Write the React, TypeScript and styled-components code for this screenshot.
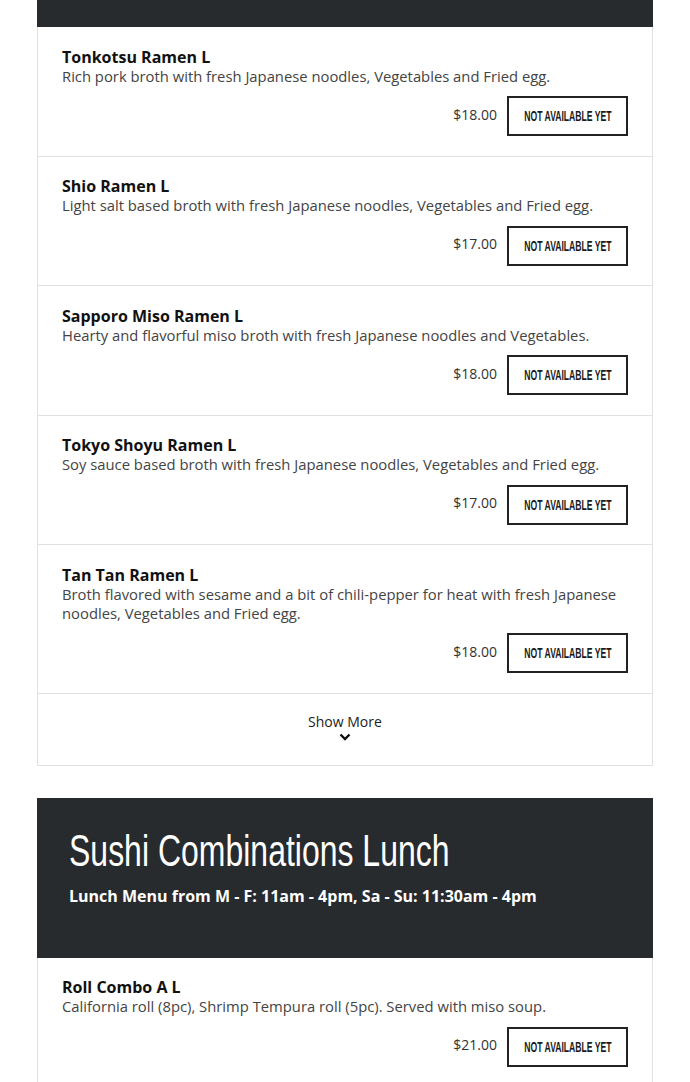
import React from 'react'
import styled, { createGlobalStyle } from 'styled-components'

const GlobalStyle = createGlobalStyle`
    body {
        margin: 0;
        background: #ffffff;
        font-family: 'Open Sans', 'Liberation Sans', sans-serif;
        color: #222;
    }
`

const Page = styled.div`
    width: 616px;
    margin: 0 37px;
    display: flex;
    flex-direction: column;
`

const Section = styled.section`
    display: flex;
    flex-direction: column;
    margin-bottom: 32px;
`

const SectionHeader = styled.div<{ $cut?: boolean }>`
    background-color: #282b2e;
    color: #ffffff;
    padding: ${({ $cut }) => ($cut ? '0' : '26px 32px 50px')};
    height: ${({ $cut }) => ($cut ? '27px' : 'auto')};
    box-sizing: border-box;
`

// no condensed face installed, so squeeze a plain sans to the narrow look
const SectionTitle = styled.h2`
    margin: 0;
    font-family: 'Liberation Sans', Arial, sans-serif;
    font-weight: 400;
    font-size: 44px;
    line-height: 54px;
    white-space: nowrap;

    span {
        display: inline-block;
        transform: scaleX(0.727);
        transform-origin: left center;
    }
`

const SectionSubtitle = styled.p`
    margin: 6px 0 0;
    font-size: 16px;
    font-weight: 700;
    line-height: 24px;
`

const ItemList = styled.div`
    border-left: 1px solid #e1e1e1;
    border-right: 1px solid #e1e1e1;
`

const Item = styled.div`
    padding: 20.5px 24px 19.5px;
    border-bottom: 1px solid #e1e1e1;
    display: flex;
    flex-direction: column;
`

const ItemName = styled.h3`
    margin: 0;
    font-size: 16px;
    font-weight: 700;
    line-height: 19px;
    color: #111;
`

const ItemDesc = styled.p`
    margin: 0;
    font-size: 14.8px;
    line-height: 19px;
    color: #444;
`

const ItemFooter = styled.div`
    margin-top: 10.5px;
    display: flex;
    justify-content: flex-end;
    align-items: center;
    gap: 10px;
`

const Price = styled.span`
    font-size: 14px;
    color: #333;
    margin-top: -4px;
`

const OrderButton = styled.button`
    height: 40px;
    width: 121px;
    box-sizing: border-box;
    background: #ffffff;
    border: 2px solid #222;
    padding: 0;
    display: flex;
    align-items: center;
    justify-content: center;
    font-family: 'Liberation Sans', Arial, sans-serif;
    font-weight: 700;
    font-size: 14px;
    text-transform: uppercase;
    white-space: nowrap;
    color: #1a1a1a;
    cursor: pointer;

    span {
        display: inline-block;
        transform: scaleX(0.615);
    }
`

const ShowMore = styled.button`
    width: 100%;
    height: 72px;
    box-sizing: border-box;
    background: #ffffff;
    border: none;
    border-bottom: 1px solid #e1e1e1;
    display: flex;
    flex-direction: column;
    align-items: center;
    justify-content: flex-start;
    padding: 18px 0 0;
    font-family: 'Open Sans', 'Liberation Sans', sans-serif;
    font-size: 14px;
    line-height: 19px;
    color: #222;
    cursor: pointer;
`

const Chevron = () => (
    <svg width="12" height="8" viewBox="0 0 12 8" style={{ marginTop: 2 }}>
        <path d="M1.5 1.5 L6 6 L10.5 1.5" fill="none" stroke="#111" strokeWidth="2.4" />
    </svg>
)

type MenuItem = { name: string; desc: string; price: string }

const ramen: MenuItem[] = [
    {
        name: 'Tonkotsu Ramen L',
        desc: 'Rich pork broth with fresh Japanese noodles, Vegetables and Fried egg.',
        price: '$18.00',
    },
    {
        name: 'Shio Ramen L',
        desc: 'Light salt based broth with fresh Japanese noodles, Vegetables and Fried egg.',
        price: '$17.00',
    },
    {
        name: 'Sapporo Miso Ramen L',
        desc: 'Hearty and flavorful miso broth with fresh Japanese noodles and Vegetables.',
        price: '$18.00',
    },
    {
        name: 'Tokyo Shoyu Ramen L',
        desc: 'Soy sauce based broth with fresh Japanese noodles, Vegetables and Fried egg.',
        price: '$17.00',
    },
    {
        name: 'Tan Tan Ramen L',
        desc: 'Broth flavored with sesame and a bit of chili-pepper for heat with fresh Japanese noodles, Vegetables and Fried egg.',
        price: '$18.00',
    },
]

const sushi: MenuItem[] = [
    {
        name: 'Roll Combo A L',
        desc: 'California roll (8pc), Shrimp Tempura roll (5pc). Served with miso soup.',
        price: '$21.00',
    },
]

const MenuRow: React.FC<{ item: MenuItem }> = ({ item }) => (
    <Item>
        <ItemName>{item.name}</ItemName>
        <ItemDesc>{item.desc}</ItemDesc>
        <ItemFooter>
            <Price>{item.price}</Price>
            <OrderButton>
                <span>Not available yet</span>
            </OrderButton>
        </ItemFooter>
    </Item>
)

const App: React.FC = () => {
    return (
        <>
            <GlobalStyle />
            <Page>
                <Section>
                    <SectionHeader $cut />
                    <ItemList>
                        {ramen.map((item) => (
                            <MenuRow key={item.name} item={item} />
                        ))}
                        <ShowMore>
                            Show More
                            <Chevron />
                        </ShowMore>
                    </ItemList>
                </Section>
                <Section>
                    <SectionHeader>
                        <SectionTitle>
                            <span>Sushi Combinations Lunch</span>
                        </SectionTitle>
                        <SectionSubtitle>
                            Lunch Menu from M - F: 11am - 4pm, Sa - Su: 11:30am - 4pm
                        </SectionSubtitle>
                    </SectionHeader>
                    <ItemList>
                        {sushi.map((item) => (
                            <MenuRow key={item.name} item={item} />
                        ))}
                    </ItemList>
                </Section>
            </Page>
        </>
    )
}

export default App
